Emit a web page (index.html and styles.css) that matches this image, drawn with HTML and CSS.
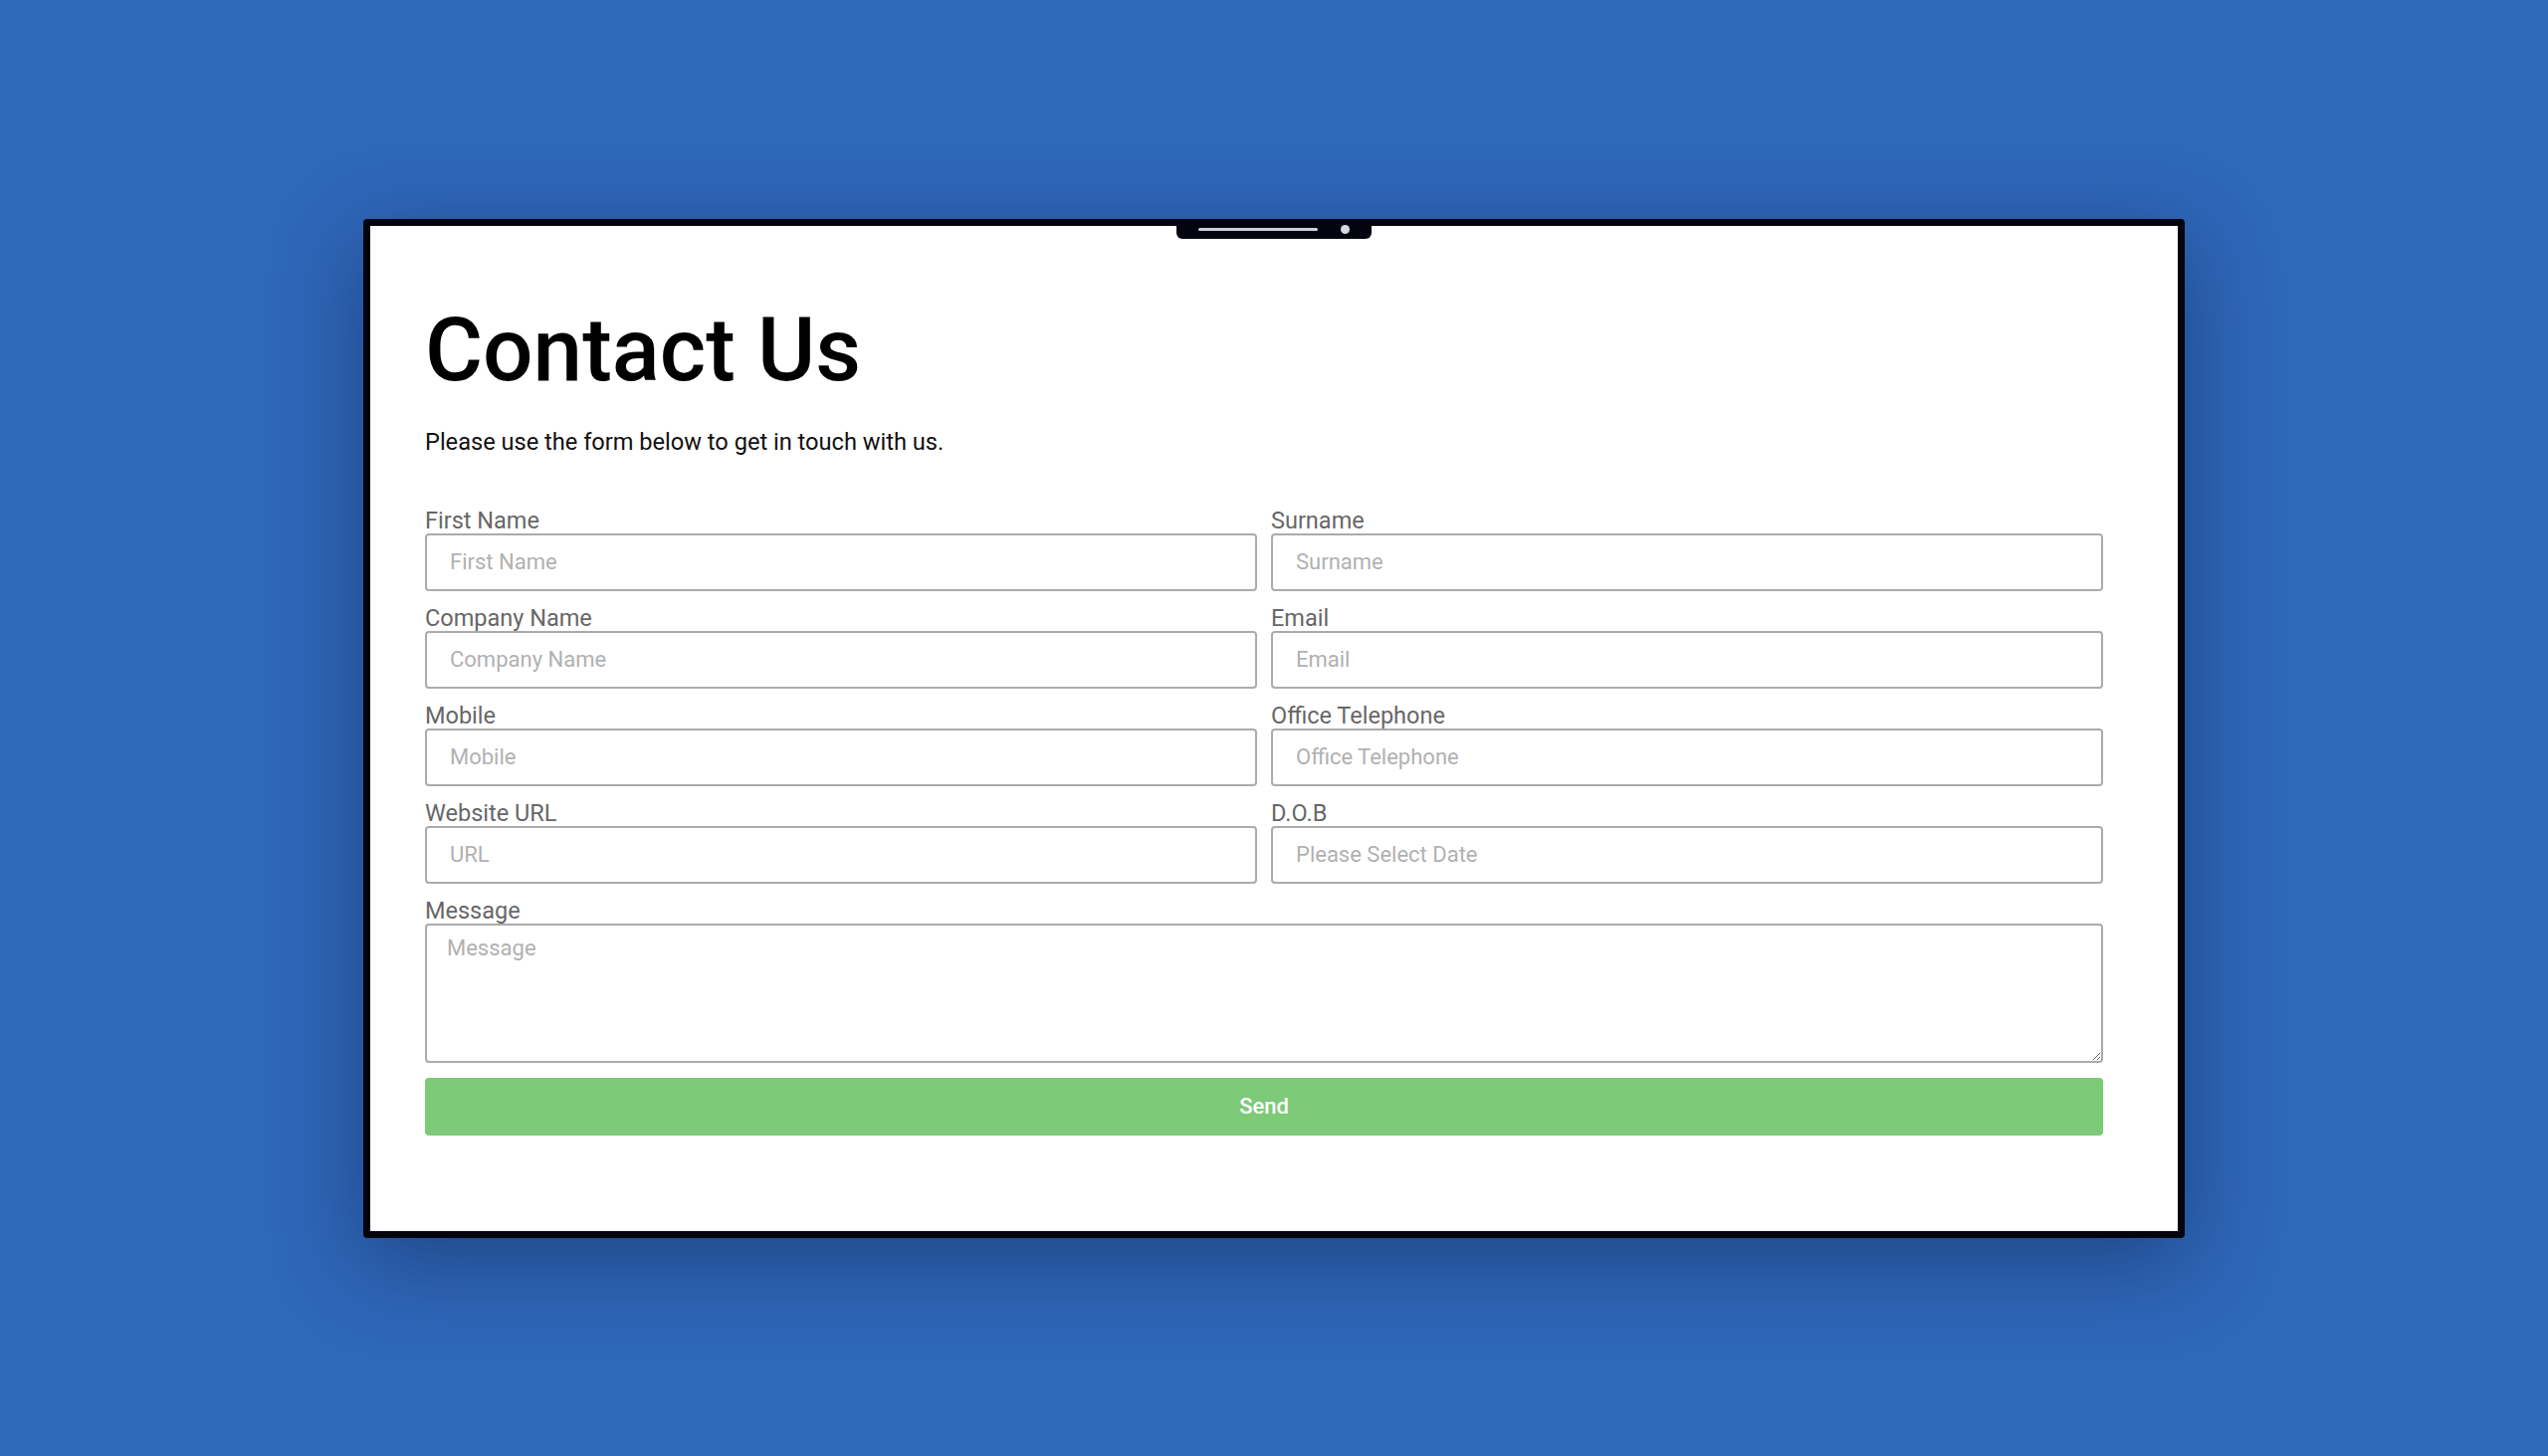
FILE: index.html
```html
<!DOCTYPE html>
<html lang="en">
<head>
<meta charset="utf-8">
<title>Contact Us</title>
<link rel="stylesheet" href="styles.css">
</head>
<body>
<div class="stage">
  <div class="device">
    <div class="notch"><span class="notch-line"></span><span class="notch-dot"></span></div>
    <div class="content">
      <h1 class="title">Contact Us</h1>
      <p class="intro">Please use the form below to get in touch with us.</p>
      <form class="form">
        <div class="field">
          <label class="label" for="fn">First Name</label>
          <input class="input" id="fn" type="text" placeholder="First Name">
        </div>
        <div class="field">
          <label class="label" for="sn">Surname</label>
          <input class="input" id="sn" type="text" placeholder="Surname">
        </div>
        <div class="field">
          <label class="label" for="cn">Company Name</label>
          <input class="input" id="cn" type="text" placeholder="Company Name">
        </div>
        <div class="field">
          <label class="label" for="em">Email</label>
          <input class="input" id="em" type="text" placeholder="Email">
        </div>
        <div class="field">
          <label class="label" for="mo">Mobile</label>
          <input class="input" id="mo" type="text" placeholder="Mobile">
        </div>
        <div class="field">
          <label class="label" for="ot">Office Telephone</label>
          <input class="input" id="ot" type="text" placeholder="Office Telephone">
        </div>
        <div class="field">
          <label class="label" for="url">Website URL</label>
          <input class="input" id="url" type="text" placeholder="URL">
        </div>
        <div class="field">
          <label class="label" for="dob">D.O.B</label>
          <input class="input" id="dob" type="text" placeholder="Please Select Date">
        </div>
        <div class="field field-wide">
          <label class="label" for="msg">Message</label>
          <textarea class="textarea" id="msg" placeholder="Message"></textarea>
        </div>
        <div class="field-wide">
          <button class="send" type="button">Send</button>
        </div>
      </form>
    </div>
  </div>
</div>
</body>
</html>
```
FILE: styles.css
```css
* { box-sizing: border-box; }

html, body {
  margin: 0;
  padding: 0;
  height: 100%;
}

body {
  background: #2f67b9;
  font-family: Roboto, "Liberation Sans", Arial, sans-serif;
}

.stage {
  height: 100vh;
  display: flex;
  align-items: center;
  justify-content: center;
}

.device {
  position: relative;
  width: 1830px;
  height: 1024px;
  background: #ffffff;
  border: 7px solid #03040d;
  border-radius: 4px;
  box-shadow: 0 24px 90px rgba(5, 15, 45, 0.38);
}

.notch {
  position: absolute;
  top: -7px;
  left: 50%;
  transform: translateX(-50%);
  width: 196px;
  height: 20px;
  background: #03040d;
  border-radius: 0 0 6px 6px;
  display: flex;
  align-items: center;
  padding: 1px 22px 0;
  gap: 23px;
}

.notch-line {
  display: block;
  width: 120px;
  height: 3px;
  background: #cdd1d7;
  border-radius: 2px;
}

.notch-dot {
  display: block;
  width: 9px;
  height: 9px;
  background: #d5d9de;
  border-radius: 50%;
}

.content {
  padding: 70px 0 0 55px;
  width: 1741px;
}

.title {
  margin: 0;
  font-size: 89px;
  font-weight: 500;
  line-height: 109px;
  color: #000;
}

.intro {
  margin: 24px 0 0;
  font-size: 23.6px;
  line-height: 28px;
  color: #111;
}

.form {
  margin-top: 53px;
  display: grid;
  grid-template-columns: 836px 836px;
  column-gap: 14px;
}

.field {
  display: flex;
  flex-direction: column;
  margin-bottom: 15px;
}

.field-wide {
  grid-column: 1 / span 2;
}

.label {
  font-size: 23.5px;
  line-height: 25px;
  color: #676767;
}

.input,
.textarea {
  font-family: Roboto, "Liberation Sans", Arial, sans-serif;
  font-size: 22px;
  color: #333;
  background: #fff;
  border: 2px solid #a9abae;
  border-radius: 4px;
  outline: none;
  margin: 0;
}

.input {
  height: 58px;
  padding: 0 23px;
}

.textarea {
  height: 140px;
  padding: 10px 20px;
  resize: vertical;
  line-height: 25px;
}

.input::placeholder,
.textarea::placeholder {
  color: #b1b1b1;
  opacity: 1;
}

.send {
  display: block;
  width: 100%;
  height: 58px;
  border: none;
  border-radius: 4px;
  background: #7dca78;
  color: #ffffff;
  font-family: Roboto, "Liberation Sans", Arial, sans-serif;
  font-size: 22px;
  font-weight: 500;
  cursor: pointer;
}
```
